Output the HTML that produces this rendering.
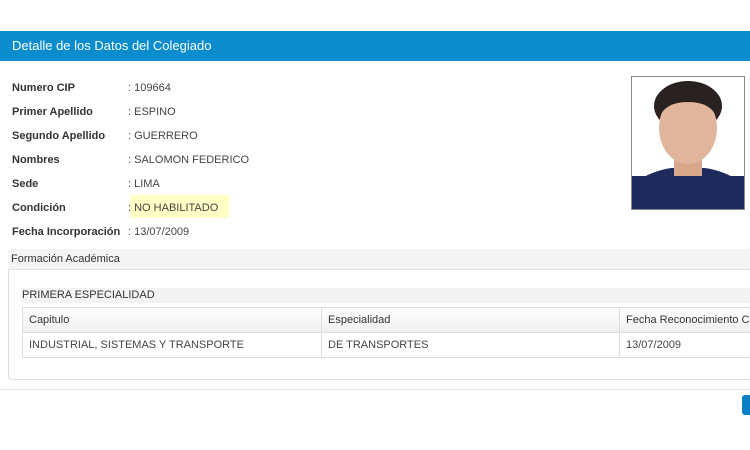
<!DOCTYPE html>
<html><head><meta charset="utf-8"><style>
*{margin:0;padding:0;box-sizing:border-box}
body{width:750px;height:450px;overflow:hidden;background:#fff;font-family:"Liberation Sans",Arial,sans-serif;position:relative;color:#333}
.abs{position:absolute}
.hdr{left:0;top:31px;width:750px;height:30px;background:#0b8dcd;color:#fff;font-size:13px;line-height:30px;padding-left:12px}
.lbl{left:12px;font-size:11px;font-weight:bold;color:#333}
.val{left:128px;font-size:11px;color:#444}
.panel{left:8px;top:249px;width:760px;height:131px;border:1px solid #ddd;border-radius:4px}
.ph{left:8px;top:249px;width:760px;height:21px;background:#f4f4f4;border-bottom:1px solid #e2e2e2;border-radius:4px 0 0 0}
table{border-collapse:collapse;font-size:11px;color:#444;table-layout:fixed}
td{border:1px solid #ddd;height:25px;padding-left:6px;white-space:nowrap;overflow:hidden}
</style></head><body>
<div class="abs hdr">Detalle de los Datos del Colegiado</div>
<div class="abs" style="left:130px;top:195px;width:99px;height:23px;background:#ffffc6"></div>
<div class="abs lbl" style="top:82px">Numero CIP</div><div class="abs val" style="top:82px">: 109664</div>
<div class="abs lbl" style="top:106px">Primer Apellido</div><div class="abs val" style="top:106px">: ESPINO</div>
<div class="abs lbl" style="top:130px">Segundo Apellido</div><div class="abs val" style="top:130px">: GUERRERO</div>
<div class="abs lbl" style="top:154px">Nombres</div><div class="abs val" style="top:154px">: SALOMON FEDERICO</div>
<div class="abs lbl" style="top:178px">Sede</div><div class="abs val" style="top:178px">: LIMA</div>
<div class="abs lbl" style="top:202px">Condición</div><div class="abs val" style="top:202px">: NO HABILITADO</div>
<div class="abs lbl" style="top:226px">Fecha Incorporación</div><div class="abs val" style="top:226px">: 13/07/2009</div>
<svg class="abs" style="left:631px;top:76px" width="114" height="134">
<rect x="0.5" y="0.5" width="113" height="133" fill="#fff" stroke="#888"/>
<rect x="1" y="100" width="112" height="33" fill="#1f2a5c"/>
<path d="M1 133 L1 108 Q20 95 40 92 L74 92 Q95 95 113 108 L113 133Z" fill="#1f2a5c"/>
<rect x="43" y="78" width="28" height="22" fill="#d9a88a"/>
<ellipse cx="57" cy="30" rx="34" ry="25" fill="#2a2220"/>
<ellipse cx="57" cy="52" rx="29" ry="36" fill="#e2b69c"/>
<path d="M28 42 Q30 14 57 14 Q84 14 86 42 Q80 26 57 26 Q34 26 28 42Z" fill="#2a2220"/>
</svg>
<div class="abs panel"></div>
<div class="abs ph"></div>
<div class="abs" style="left:11px;top:253px;font-size:11px;color:#333">Formación Académica</div>
<div class="abs" style="left:22px;top:288px;width:740px;height:15px;background:#f3f3f3"></div>
<div class="abs" style="left:22px;top:289px;font-size:11px;color:#333">PRIMERA ESPECIALIDAD</div>
<table class="abs" style="left:22px;top:307px;width:760px">
<colgroup><col style="width:299px"><col style="width:298px"><col style="width:163px"></colgroup>
<tr style="background:linear-gradient(#fff,#efefef);color:#333"><td>Capitulo</td><td>Especialidad</td><td>Fecha Reconocimiento Colegiado</td></tr>
<tr><td>INDUSTRIAL, SISTEMAS Y TRANSPORTE</td><td>DE TRANSPORTES</td><td>13/07/2009</td></tr>
</table>
<div class="abs" style="left:0;top:389px;width:750px;height:1px;background:#e4e4e4"></div>
<div class="abs" style="left:742px;top:395px;width:12px;height:20px;background:#0b7fc4;border-radius:3px"></div>
</body></html>
